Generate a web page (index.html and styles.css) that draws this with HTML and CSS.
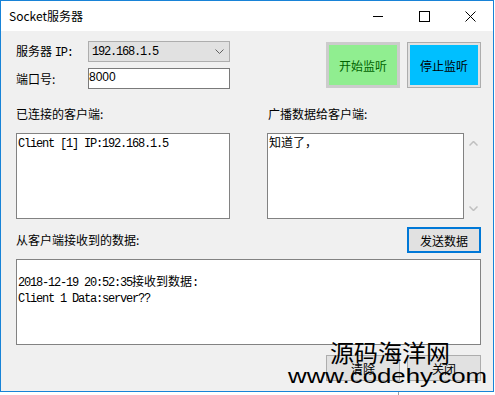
FILE: index.html
```html
<!DOCTYPE html>
<html lang="zh-CN">
<head>
    <meta charset="UTF-8">
    <title>Socket服务器</title>
    <link rel="stylesheet" href="styles.css">
</head>
<body>
    <div class="window">
        <div class="titlebar">
            <span class="title">Socket服务器</span>
            <div class="caption-buttons">
                <span class="cap-btn">
                    <svg width="11" height="11" viewBox="0 0 11 11"><path d="M0 5.5H10" stroke="#000" stroke-width="1"/></svg>
                </span>
                <span class="cap-btn">
                    <svg width="11" height="11" viewBox="0 0 11 11"><rect x="0.5" y="0.5" width="10" height="10" fill="none" stroke="#000" stroke-width="1"/></svg>
                </span>
                <span class="cap-btn">
                    <svg width="11" height="11" viewBox="0 0 11 11"><path d="M0.5 0.5L10.5 10.5M10.5 0.5L0.5 10.5" stroke="#000" stroke-width="1"/></svg>
                </span>
            </div>
        </div>

        <div class="client">
            <div class="top">
                <div class="fields">
                    <label class="label">服务器 <span class="half">IP:</span></label>
                    <div class="combo">
                        <span class="half">192.168.1.5</span>
                        <svg class="combo-arrow" width="9" height="5" viewBox="0 0 9 5"><path d="M0.5 0.5L4.5 4.5L8.5 0.5" fill="none" stroke="#606060" stroke-width="1"/></svg>
                    </div>
                    <label class="label">端口号:</label>
                    <div class="textbox port">8000</div>
                </div>
                <div class="big-buttons">
                    <button class="btn-start">开始监听</button>
                    <button class="btn-stop">停止监听</button>
                </div>
            </div>

            <div class="middle">
                <div class="col">
                    <div class="label">已连接的客户端:</div>
                    <div class="box list"><span class="half">Client [1] IP:192.168.1.5</span></div>
                </div>
                <div class="col">
                    <div class="label right-label">广播数据给客户端:</div>
                    <div class="broadcast">
                        <div class="box message">知道了，</div>
                        <div class="scroll">
                            <svg width="9" height="5" viewBox="0 0 9 5"><path d="M0.5 4.5L4.5 0.5L8.5 4.5" fill="none" stroke="#c0c0c0" stroke-width="1.5"/></svg>
                            <svg width="9" height="5" viewBox="0 0 9 5"><path d="M0.5 0.5L4.5 4.5L8.5 0.5" fill="none" stroke="#c0c0c0" stroke-width="1.5"/></svg>
                        </div>
                    </div>
                </div>
            </div>

            <div class="receive-head">
                <div class="label">从客户端接收到的数据:</div>
                <button class="btn btn-send">发送数据</button>
            </div>
            <div class="box received">
                <div>&nbsp;</div>
                <div><span class="half">2018-12-19 20:52:35</span>接收到数据<span class="half">:</span></div>
                <div><span class="half">Client 1 Data:server??</span></div>
            </div>

            <div class="bottom-buttons">
                <button class="btn">清除</button>
                <button class="btn">关闭</button>
            </div>
        </div>

        <div class="watermark">
            <div class="wm-cn">源码海洋网</div>
            <div class="wm-url">www.codehy.com</div>
        </div>
    </div>
    <div class="under-line"></div>
</body>
</html>
```

FILE: styles.css
```css
body {
    margin: 0;
    background-color: #ffffff;
    font-family: "Noto Sans CJK SC", sans-serif;
    font-size: 12px;
    color: #000;
}

.window {
    position: relative;
    width: 494px;
    height: 392px;
    box-sizing: border-box;
    border: 1px solid #1883d7;
    background-color: #f0f0f0;
    overflow: hidden;
}

.titlebar {
    height: 30px;
    background-color: #fff;
    display: flex;
    align-items: center;
    justify-content: space-between;
}

.title {
    padding-left: 8px;
    font-size: 12px;
    line-height: 14px;
    color: #000;
}

.caption-buttons {
    display: flex;
}

.cap-btn {
    width: 46px;
    height: 30px;
    display: flex;
    align-items: center;
    justify-content: center;
}

.client {
    padding: 10px 12px 0 15px;
}

/* 半形字元 (宋體樣式) */
.half {
    font-family: "Liberation Mono", monospace;
    font-size: 12px;
    letter-spacing: -1.2px;
}

.label {
    font-size: 12px;
    line-height: 14px;
    white-space: nowrap;
}

.top {
    display: flex;
    justify-content: space-between;
}

.fields {
    display: grid;
    grid-template-columns: 72px 142px;
    grid-auto-rows: 21px;
    row-gap: 6px;
    align-items: center;
}

.combo {
    height: 21px;
    box-sizing: border-box;
    border: 1px solid #adadad;
    background-color: #e1e1e1;
    display: flex;
    align-items: center;
    justify-content: space-between;
    padding: 0 5px 0 3px;
}

.textbox {
    height: 21px;
    box-sizing: border-box;
    border: 1px solid #7a7a7a;
    background-color: #fff;
}

.port {
    font-family: "Liberation Sans", sans-serif;
    font-size: 12px;
    line-height: 17px;
    padding-left: 0;
}

.big-buttons {
    display: flex;
    gap: 7px;
    padding-top: 1px;
}

.big-buttons button {
    width: 74px;
    height: 46px;
    box-sizing: border-box;
    font-family: "Noto Sans CJK SC", sans-serif;
    font-size: 12px;
    padding: 0;
}

.btn-start {
    background-color: #90ee90;
    border: 3px solid #cccccc;
    color: #006400;
}

.btn-stop {
    background-color: #00bfff;
    border: 1px solid #adadad;
    box-shadow: inset 0 0 0 2px #e1e1e1;
    color: #000;
}

.middle {
    display: flex;
    gap: 37px;
    margin-top: 18px;
}

.right-label {
    padding-left: 1px;
}

.box {
    box-sizing: border-box;
    border: 1px solid #828282;
    background-color: #fff;
    line-height: 13px;
    padding: 1px 0 0 1px;
}

.list {
    width: 214px;
    height: 86px;
    margin-top: 12px;
}

.broadcast {
    display: flex;
    margin-top: 12px;
}

.message {
    width: 197px;
    height: 86px;
    line-height: 14px;
}

.scroll {
    width: 17px;
    height: 86px;
    box-sizing: border-box;
    display: flex;
    flex-direction: column;
    justify-content: space-between;
    align-items: center;
    padding: 8px 0 8px 1px;
}

.receive-head {
    display: flex;
    justify-content: space-between;
    align-items: center;
    margin-top: 8px;
}

.btn {
    width: 74px;
    height: 26px;
    box-sizing: border-box;
    border: 1px solid #adadad;
    background-color: #e1e1e1;
    font-family: "Noto Sans CJK SC", sans-serif;
    font-size: 12px;
    color: #000;
    padding: 0;
}

.btn-send {
    border: 2px solid #0078d7;
}

.received {
    width: 465px;
    height: 86px;
    margin-top: 6px;
}

.bottom-buttons {
    display: flex;
    justify-content: flex-end;
    gap: 7px;
    margin-top: 10px;
}

/* 浮水印，疊在按鈕上方 */
.watermark {
    position: absolute;
    left: 287px;
    top: 337px;
    width: 210px;
    pointer-events: none;
}

.wm-cn {
    font-family: "Noto Sans CJK SC", sans-serif;
    font-size: 24px;
    line-height: 27px;
    padding-left: 42px;
}

.wm-url {
    font-family: "Liberation Sans", sans-serif;
    font-size: 21px;
    line-height: 22px;
    transform: scaleX(1.23);
    transform-origin: left top;
}

.under-line {
    width: 1px;
    height: 3px;
    margin-left: 398px;
    background-color: #a0a0a0;
}
```
